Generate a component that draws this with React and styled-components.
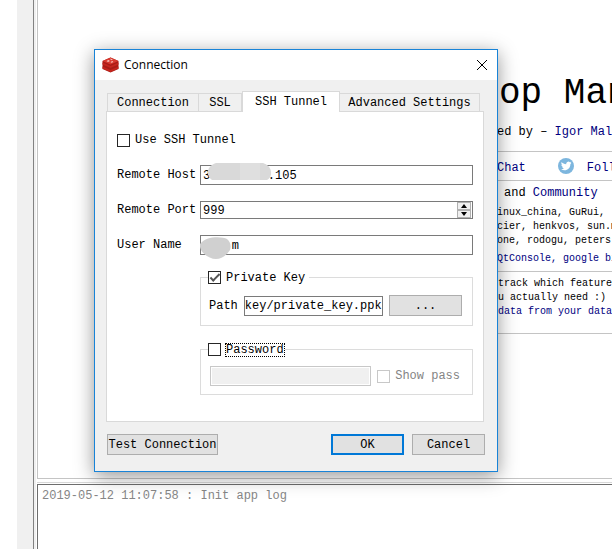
import React from "react";
import styled, { createGlobalStyle } from "styled-components";

const GlobalStyle = createGlobalStyle`
  *, *::before, *::after { box-sizing: border-box; }
  html, body { margin: 0; height: 100%; background: #fff; }
  #root { height: 100%; }
  body, button, input {
    font-family: "Liberation Mono", monospace;
    font-size: 12px;
    line-height: 14px;
    color: #000;
  }
`;

const Window = styled.div`
  display: grid;
  grid-template-columns: 17px 16px minmax(0, 1fr);
  height: 100vh;
  min-height: 500px;
  overflow: hidden;
  position: relative;
`;

const Gutter = styled.div`
  background: ${(p) => (p.$shaded ? "#f0f0f0" : "#fff")};
`;

const Workspace = styled.main`
  display: flex;
  flex-direction: column;
  border-left: 1px solid #828282;
  padding-left: 3px;
  background: linear-gradient(90deg, #f0f0f0 2px, #fff 2px);
`;

const Welcome = styled.section`
  border-left: 1px solid #c4c4c4;
  border-bottom: 1px solid #c4c4c4;
  height: 479px;
  flex: none;
  padding: 70px 0 0 459px;
  overflow: hidden;
  white-space: pre;
`;

const Headline = styled.h1`
  margin: 0 0 4px;
  padding-left: 2px;
  font-size: 36px;
  line-height: 48px;
  font-weight: 400;
`;

const Line = styled.p`
  margin: 0;
  font-size: ${(p) => (p.$small ? 10 : 12)}px;
  line-height: ${(p) => (p.$small ? 14 : 18)}px;
  padding-left: ${(p) => p.$indent || 0}px;
`;

const Link = styled.a`
  color: #000080;
  text-decoration: none;
`;

const Band = styled.div`
  border-bottom: 1px solid #c4c4c4;
  padding: ${(p) => p.$pad || "0"};
`;

const Social = styled.div`
  display: flex;
  align-items: center;
  height: 29px;
  border-bottom: 1px solid #c4c4c4;
  padding-top: 4px;

  svg { margin: -4px 13px 0 32px; flex: none; }
`;

const Credits = styled(Line)`
  margin: 4px 0;
`;

const LogPane = styled.section`
  flex: 1;
  margin-top: 3px;
  border-top: 1px solid #d8d8d8;
  padding-top: 1px;
`;

const LogText = styled.div`
  height: 100%;
  border-top: 1px solid #6e6e6e;
  border-left: 1px solid #6e6e6e;
  padding: 4px;
  color: #868686;
`;

const Dialog = styled.div`
  position: absolute;
  left: 94px;
  top: 49px;
  width: 404px;
  background: #f0f0f0;
  border: 1px solid #1883d7;
  box-shadow: 0 4px 18px rgba(0, 0, 0, 0.42);
`;

const TitleBar = styled.header`
  display: flex;
  align-items: center;
  height: 30px;
  padding: 0 9px 0 7px;
  gap: 5px;
  background: #fff;
`;

const Title = styled.h2`
  flex: 1;
  margin: 0;
  font-family: "Open Sans", sans-serif;
  font-size: 12px;
  line-height: 18px;
  font-weight: 400;
`;

const CloseButton = styled.button`
  display: flex;
  padding: 0;
  border: 0;
  background: none;
`;

const Body = styled.div`
  padding: 11px 13px 16px 11px;
`;

const TabList = styled.div`
  display: flex;
  align-items: flex-end;
  padding: 0 4px 0 1px;
`;

const Tab = styled.button`
  flex: ${(p) => p.$grow} 0 auto;
  padding: 0;
  height: ${(p) => (p.$active ? 21 : 18)}px;
  border: 1px solid #d9d9d9;
  border-bottom: 0;
  border-left-width: ${(p) => (p.$joined ? 0 : 1)}px;
  background: ${(p) => (p.$active ? "#fff" : "#f0f0f0")};
  position: relative;
  z-index: ${(p) => (p.$active ? 1 : 0)};
  margin-bottom: ${(p) => (p.$active ? -1 : 0)}px;
  width: ${(p) => p.$width}px;
`;

const Panel = styled.form`
  display: grid;
  grid-template-columns: 83px minmax(0, 1fr);
  align-items: center;
  padding: 18px 10px 26px;
  row-gap: 15px;
  background: #fff;
  border: 1px solid #d9d9d9;
`;

const Check = styled.label`
  display: flex;
  align-items: center;
  gap: 5px;
  height: ${(p) => (p.$tall ? 20 : 13)}px;
  grid-column: 1 / -1;
  white-space: nowrap;
  color: ${(p) => (p.$muted ? "#848484" : "#000")};
`;

const CheckBox = styled.input`
  appearance: none;
  flex: none;
  margin: 0;
  width: 13px;
  height: 13px;
  background: #fff;
  border: 1px solid #262626;
  display: grid;
  place-items: center;

  &:disabled { border-color: #c8c8c8; }
  &:checked::after {
    content: "";
    width: 10px;
    height: 5px;
    margin-top: -3px;
    border: solid #555;
    border-width: 0 0 2px 2px;
    transform: rotate(-45deg);
  }
`;

const FocusText = styled.span`
  outline: ${(p) => (p.$focused ? "1px dotted #000" : "none")};
  line-height: 12px;
`;

const Field = styled.div`
  position: relative;
  display: flex;
  height: 20px;
  align-items: center;
`;

const TextBox = styled.input`
  flex: 1;
  min-width: 0;
  width: 100%;
  height: ${(p) => (p.$short ? 18 : 20)}px;
  margin: 0;
  padding: 1px ${(p) => (p.$tight ? 0 : 2)}px 0;
  border: 1px solid #7a7a7a;
  border-radius: 0;
  background: #fff;
  outline: none;
  appearance: textfield;

  &:disabled {
    background: #f0f0f0;
    border-color: #c8c8c8;
    box-shadow: inset 0 0 0 1px #fff;
  }
  &::-webkit-inner-spin-button { display: none; }
`;

const Stepper = styled.div`
  position: absolute;
  right: 2px;
  top: 2px;
  width: 14px;
  display: grid;
  grid-template-rows: 8px 8px;
  background: #b0b0b0;
`;

const Step = styled.button`
  display: grid;
  place-items: center;
  padding: 0;
  border: 1px solid #b0b0b0;
  background: #f0f0f0;
`;

const Smudge = styled.svg`
  position: absolute;
  left: ${(p) => p.$left}px;
  top: ${(p) => p.$top}px;
`;

const Group = styled.fieldset`
  grid-column: 2;
  min-width: 0;
  margin: ${(p) => p.$gap}px 0 0;
  padding: ${(p) => p.$pad};
  border: 1px solid #dcdcdc;
`;

const Legend = styled.legend`
  padding: 0 ${(p) => p.$after}px 0 0;
  margin-left: ${(p) => p.$shift || 0}px;
`;

const GroupRow = styled.div`
  display: flex;
  align-items: center;
  gap: 6px;
`;

const PushButton = styled.button`
  flex: none;
  width: ${(p) => p.$width}px;
  height: 21px;
  padding: 0;
  background: #e1e1e1;
  border: ${(p) => (p.$primary ? "2px solid #0078d7" : "1px solid #adadad")};
`;

const Footer = styled.footer`
  display: flex;
  gap: 8px;
  margin: 12px -1px 0 1px;
`;

const Spacer = styled.div`
  flex: 1;
`;

function RedisIcon() {
  return (
    <svg width="17" height="16" viewBox="0 0 17 16" aria-hidden="true">
      <path d="M.5 4 8.500.5 16.500 4v8l-8 3.500-8-3.500z" fill="#a81c16" />
      <path d="M.5 4 8.500.5 16.500 4l-8 3.500z" fill="#d8382e" />
      <path d="M.5 5.500 8.500 9l8-3.500v2l-8 3.500-8-3.500zM.5 9.500l8 3.500 8-3.500v2l-8 3.500-8-3.500z" fill="#c4251d" />
      <path d="m4.500 4 2-1 1.500 1-2 1zM8 1.500l3 1-2 .8zM8.500 5l2-1 .8 1-1.800.8z" fill="#f8c4be" />
    </svg>
  );
}

function TwitterIcon() {
  return (
    <svg width="16" height="16" viewBox="0 0 16 16" aria-hidden="true">
      <circle cx="8" cy="8" r="8" fill="#7db6de" />
      <path
        d="M13.500 4.700c-.4.200-.8.300-1.200.3.400-.3.700-.7.900-1.200-.4.300-.9.400-1.300.5a2.200 2.200 0 0 0-3.700 2C6.400 6.200 4.700 5.300 3.600 4a2.200 2.200 0 0 0 .7 2.900c-.4 0-.7-.1-1-.3 0 1.100.7 2 1.700 2.200-.3.100-.6.100-1 0 .3.900 1.100 1.500 2.100 1.500A4.500 4.500 0 0 1 3 11.200c4.600 2.700 9.500-.3 9.400-5.300.4-.3.800-.7 1.100-1.200z"
        fill="#fff"
      />
    </svg>
  );
}

function Arrow({ down }) {
  return (
    <svg width="6" height="4" viewBox="0 0 6 4" aria-hidden="true">
      <path d={down ? "M0 0h6L3 4z" : "M0 4h6L3 0z"} fill="#000" />
    </svg>
  );
}

export default function App() {
  return (
    <>
      <GlobalStyle />
      <Window>
        <Gutter />
        <Gutter $shaded />
        <Workspace>
          <Welcome>
            <Headline>op Man</Headline>
            <Band $pad="1px 0 10px">
              <Line>{"ed by – "}<Link href="#author">Igor Mali</Link></Line>
            </Band>
            <Social>
              <Link href="#chat">Chat</Link>
              <TwitterIcon />
              <Link href="#follow">Foll</Link>
            </Social>
            <Band $pad="3px 0 5px">
              <Line $indent={7}>{"and "}<Link href="#community">Community</Link></Line>
              <Credits $small>
                {"inux_china, GuRui,\ncier, henkvos, sun.m\none, rodogu, peters"}
              </Credits>
              <Line $small>
                <Link href="#qtconsole">QtConsole, </Link><Link href="#breakpad">google bi</Link>
              </Line>
            </Band>
            <Band $pad="5px 0 14px">
              <Line $small $indent={1}>
                {"track which feature\nu actually need :)\n"}
                <Link href="#data">data from your data</Link>
              </Line>
            </Band>
          </Welcome>
          <LogPane>
            <LogText role="log">2019-05-12 11:07:58 : Init app log</LogText>
          </LogPane>
        </Workspace>

        <Dialog role="dialog" aria-labelledby="dialog-title">
          <TitleBar>
            <RedisIcon />
            <Title id="dialog-title">Connection</Title>
            <CloseButton type="button" aria-label="Close">
              <svg width="12" height="12" viewBox="0 0 12 12" aria-hidden="true">
                <path d="m1 1 10 10M11 1 1 11" stroke="#000" strokeWidth="1" />
              </svg>
            </CloseButton>
          </TitleBar>
          <Body>
            <TabList role="tablist">
              <Tab type="button" role="tab" $width={92} $grow={0}>Connection</Tab>
              <Tab type="button" role="tab" $width={43} $grow={0} $joined>SSL</Tab>
              <Tab type="button" role="tab" aria-selected="true" $width={98} $grow={0} $active>SSH Tunnel</Tab>
              <Tab type="button" role="tab" $width={138} $grow={1} $joined>Advanced Settings</Tab>
            </TabList>
            <Panel id="ssh-form">
              <Check $tall>
                <CheckBox type="checkbox" />
                Use SSH Tunnel
              </Check>
              <label htmlFor="host">Remote Host</label>
              <Field>
                <TextBox id="host" defaultValue="3        .105" />
                <Smudge $left={7} $top={-3} width="64" height="19" viewBox="0 0 64 19" aria-hidden="true">
                  <path d="M9 1h47c10 3 10 14 4 17H5C-1 14-1 4 9 1z" fill="#d9d9d9" />
                  <path d="M33 1h20v17H33z" fill="#dfdfdf" />
                </Smudge>
              </Field>
              <label htmlFor="port">Remote Port</label>
              <Field>
                <TextBox id="port" type="number" defaultValue="999" $short />
                <Stepper>
                  <Step type="button" aria-label="Increase port"><Arrow /></Step>
                  <Step type="button" aria-label="Decrease port"><Arrow down /></Step>
                </Stepper>
              </Field>
              <label htmlFor="user">User Name</label>
              <Field>
                <TextBox id="user" defaultValue="    m" />
                <Smudge $left={0} $top={2} width="31" height="23" viewBox="0 0 31 23" aria-hidden="true">
                  <path d="M0 7C5-1 22-1 27 2c4 3 4 8 3 11-4 6-9 9-14 9C9 22 1 16 0 10z" fill="#d0d0d0" />
                </Smudge>
              </Field>
              <Group $gap={1} $pad="11px 10px 9px 8px">
                <Legend $shift={-1} $after={4}>
                  <Check>
                    <CheckBox type="checkbox" defaultChecked />
                    <FocusText>Private Key</FocusText>
                  </Check>
                </Legend>
                <GroupRow>
                  <label htmlFor="path">Path</label>
                  <TextBox id="path" defaultValue="key/private_key.ppk" $tight />
                  <PushButton type="button" $width={73}>...</PushButton>
                </GroupRow>
              </Group>
              <Group $gap={2} $pad="10px 12px 8px 9px">
                <Legend $shift={-2} $after={1}>
                  <Check>
                    <CheckBox type="checkbox" />
                    <FocusText $focused>Password</FocusText>
                  </Check>
                </Legend>
                <GroupRow>
                  <TextBox type="password" aria-label="Password" disabled />
                  <Check $muted>
                    <CheckBox type="checkbox" disabled />
                    Show pass
                  </Check>
                </GroupRow>
              </Group>
            </Panel>
            <Footer>
              <PushButton type="button" $width={111}>Test Connection</PushButton>
              <Spacer />
              <PushButton type="submit" form="ssh-form" $width={73} $primary>OK</PushButton>
              <PushButton type="button" $width={73}>Cancel</PushButton>
            </Footer>
          </Body>
        </Dialog>
      </Window>
    </>
  );
}
